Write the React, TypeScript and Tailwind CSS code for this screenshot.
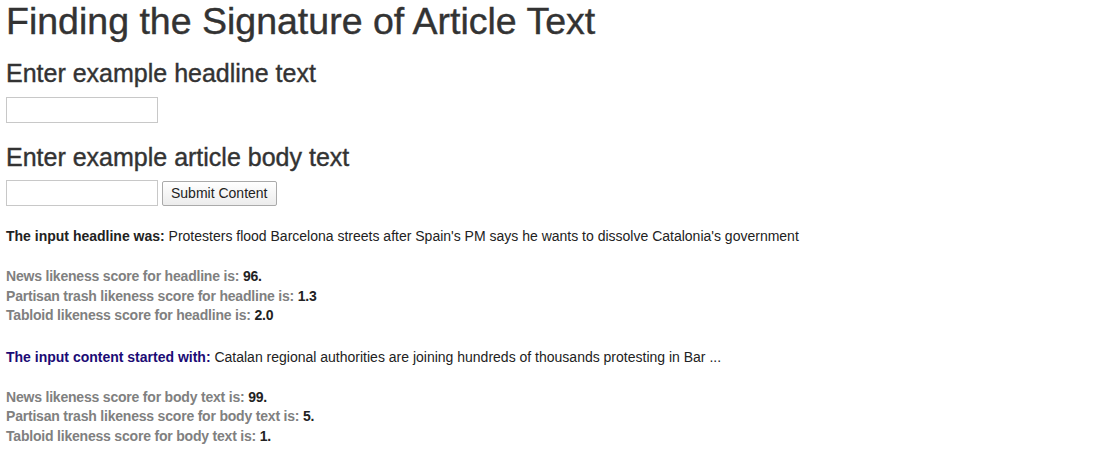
const font = { fontFamily: '"Liberation Sans", Arial, sans-serif' };

type Score = { label: string; value: string };

const headlineScores: Score[] = [
  { label: 'News likeness score for headline is:', value: '96.' },
  { label: 'Partisan trash likeness score for headline is:', value: '1.3' },
  { label: 'Tabloid likeness score for headline is:', value: '2.0' },
];

const bodyScores: Score[] = [
  { label: 'News likeness score for body text is:', value: '99.' },
  { label: 'Partisan trash likeness score for body text is:', value: '5.' },
  { label: 'Tabloid likeness score for body text is:', value: '1.' },
];

const ScoreList = ({ scores }: { scores: Score[] }) => (
  <div className="text-[14px] leading-[19.5px] font-bold tracking-[-0.2px]">
    {scores.map((s) => (
      <div key={s.label}>
        <span className="text-[#808080]">{s.label}</span>{' '}
        <span className="text-[#222]">{s.value}</span>
      </div>
    ))}
  </div>
);

export default function App() {
  return (
    <div className="bg-white text-[#333] px-[6px] min-h-[464px] font-['Liberation_Sans',Arial,sans-serif]">
      <h1 className="text-[37.5px] leading-[1.1] pt-[1px] font-normal [-webkit-text-stroke:0.4px_#333]">
        Finding the Signature of Article Text
      </h1>
      <h3 className="text-[25px] leading-[1.1] mt-[18px] mb-[9px] font-normal [-webkit-text-stroke:0.4px_#333]">
        Enter example headline text
      </h3>
      <input
        type="text"
        className="block w-[152px] h-[26px] border border-[#c8c8c8] bg-white"
      />
      <h3 className="text-[25px] leading-[1.1] mt-[21px] mb-[9px] font-normal [-webkit-text-stroke:0.4px_#333]">
        Enter example article body text
      </h3>
      <div className="flex items-center gap-[4px]">
        <input
          type="text"
          className="w-[152px] h-[26px] border border-[#c8c8c8] bg-white"
        />
        <button
          type="button"
          className="h-[25px] px-[8px] text-[14px] text-[#222] border border-[#aaa] rounded-[2px] bg-gradient-to-b from-white to-[#ececec]"
          style={font}
        >
          Submit Content
        </button>
      </div>
      <p className="text-[14px] leading-[19px] text-[#222] mt-[21px]">
        <b>The input headline was:</b> Protesters flood Barcelona streets after
        Spain's PM says he wants to dissolve Catalonia's government
      </p>
      <div className="mt-[21px]">
        <ScoreList scores={headlineScores} />
      </div>
      <p className="text-[14px] leading-[19px] text-[#222] mt-[22px]">
        <b className="text-[#1b0b75]">The input content started with:</b>{' '}
        Catalan regional authorities are joining hundreds of thousands
        protesting in Bar ...
      </p>
      <div className="mt-[21px]">
        <ScoreList scores={bodyScores} />
      </div>
    </div>
  );
}
